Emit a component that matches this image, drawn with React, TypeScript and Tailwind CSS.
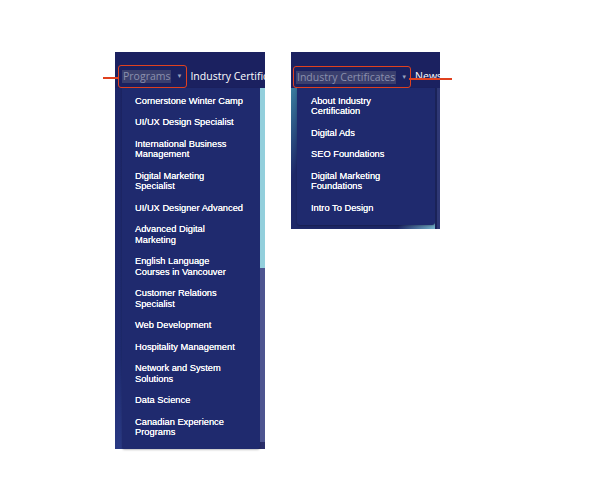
import React from "react";

const programs: string[][] = [
  ["Cornerstone Winter Camp"],
  ["UI/UX Design Specialist"],
  ["International Business", "Management"],
  ["Digital Marketing", "Specialist"],
  ["UI/UX Designer Advanced"],
  ["Advanced Digital", "Marketing"],
  ["English Language", "Courses in Vancouver"],
  ["Customer Relations", "Specialist"],
  ["Web Development"],
  ["Hospitality Management"],
  ["Network and System", "Solutions"],
  ["Data Science"],
  ["Canadian Experience", "Programs"],
];

const certs: string[][] = [
  ["About Industry", "Certification"],
  ["Digital Ads"],
  ["SEO Foundations"],
  ["Digital Marketing", "Foundations"],
  ["Intro To Design"],
];

function Menu({ items, pl }: { items: string[][]; pl: string }) {
  return (
    <ul className={`flex flex-col pt-[2px] pb-[6px] ${pl}`}>
      {items.map((lines, i) => (
        <li
          key={i}
          className="py-[5.5px] text-[9.3px] leading-[10.5px] font-normal text-white [text-shadow:0_0_0.3px_#fff]"
          style={{ fontFamily: '"Liberation Sans", Arial, sans-serif' }}
        >
          {lines.map((l, j) => (
            <div key={j}>{l}</div>
          ))}
        </li>
      ))}
    </ul>
  );
}

const navFont = { fontFamily: '"Open Sans", "Noto Sans", sans-serif' };

export default function App() {
  return (
    <div className="w-[600px] h-[496px] bg-white overflow-hidden">
      <div className="flex items-start gap-[26px] pl-[115px] pt-[52px]">
        {/* Left panel */}
        <div className="relative w-[150px] flex flex-col">
          <div className="absolute left-[-12px] top-[25px] w-[15px] h-[1.5px] bg-[#e0411f]" />
          <div className="h-[36px] bg-[#1b2160] flex items-center pl-[3px] overflow-hidden whitespace-nowrap" style={navFont}>
            <div className="flex items-center h-[23px] mt-[13px] px-[3px] rounded-[3px] border-[1.5px] border-[#e0411f]">
              <span className="bg-[#3a3f6e] text-[#8b90ad] text-[10.5px] leading-[13px] px-[1px]">Programs</span>
              <span className="ml-[5px] mr-[1px] text-[#9aa0bb] text-[6px]">▼</span>
            </div>
            <span className="ml-[3px] mt-[13px] text-[10.5px] text-white">Industry Certificates</span>
          </div>
          <div className="bg-[linear-gradient(120deg,#1d2668_0%,#1f2b70_45%,#2a3a85_60%,#1e2766_75%,#2b2f6a_100%)] pl-[7px] mb-[-7px] flex">
            <div className="w-[138px] bg-[#1f2a6e] rounded-b-[3px] shadow-[0_1px_2px_rgba(0,0,0,0.25)]">
              <Menu items={programs} pl="pl-[13px]" />
            </div>
            <div className="flex-1 flex flex-col mb-[7px]">
              <div className="h-[180px] bg-[#93cfdc]" />
              <div className="flex-1 bg-[#4d5590]" />
            </div>
          </div>
        </div>

        {/* Right panel */}
        <div className="relative w-[149px] flex flex-col">
          <div className="absolute left-[118px] top-[26px] w-[43px] h-[1.5px] bg-[#e0411f]" />
          <div className="h-[36px] bg-[#1b2160] flex items-center pl-[2px] overflow-hidden whitespace-nowrap" style={navFont}>
            <div className="flex items-center h-[22px] mt-[14px] px-[2px] rounded-[3px] border-[1.5px] border-[#e0411f]">
              <span className="bg-[#3a3f6e] text-[#8b90ad] text-[10.5px] leading-[13px] px-[1px]">Industry Certificates</span>
              <span className="ml-[5px] mr-[1px] text-[#9aa0bb] text-[6px]">▼</span>
            </div>
            <span className="ml-[4px] mt-[14px] text-[10.5px] text-white">News</span>
          </div>
          <div className="bg-[linear-gradient(115deg,#3a7fa0_0%,#1e2868_20%,#1e2868_80%,#7fc3d6_100%)] pl-[6px] flex">
            <div className="w-[138px] bg-[#1f2a6e] rounded-b-[3px] mb-[4px] shadow-[0_1px_2px_rgba(0,0,0,0.25)]">
              <Menu items={certs} pl="pl-[14px]" />
            </div>
            <div className="flex-1 flex">
              <div className="w-[2px] bg-[#1a2258]" />
              <div className="flex-1 bg-[#2e3775]" />
            </div>
          </div>
        </div>
      </div>
    </div>
  );
}
